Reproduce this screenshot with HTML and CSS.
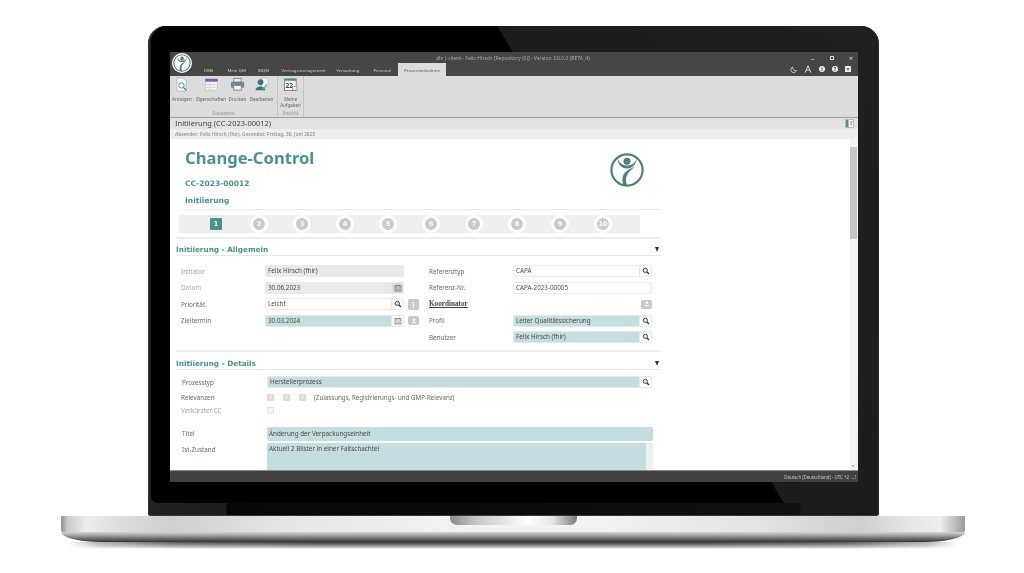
FILE: index.html
```html
<!DOCTYPE html>
<html lang="de">
<head>
<meta charset="utf-8">
<title>Change-Control</title>
<link rel="stylesheet" href="styles.css">
</head>
<body>
<svg class="defs" width="0" height="0" aria-hidden="true">
  <symbol id="search" viewBox="0 0 12 12"><circle cx="5" cy="5" r="3.2" fill="#dfe8ea" stroke="#444" stroke-width="1.5"/><path d="M7.4 7.4 10.6 10.6" stroke="#333" stroke-width="2"/></symbol>
  <symbol id="cal" viewBox="0 0 12 12"><rect x="1.5" y="2.5" width="9" height="8" fill="none" stroke="#666"/><path d="M1.5 4.5h9M4 1v2.500M8 1v2.500M4 6.500v3M6 6.500v3M8 6.500v3" stroke="#666" stroke-width=".8"/></symbol>
  <symbol id="user" viewBox="0 0 10 10"><circle cx="5" cy="3.500" r="1.600" fill="#fff"/><path d="M2 7.800c.4-2 5.600-2 6 0z" fill="#fff"/></symbol>
  <symbol id="mark" viewBox="0 0 34 34"><circle cx="17" cy="17" r="15.600" fill="none" stroke="currentColor" stroke-width="2.200"/><circle cx="17" cy="8.300" r="3.500" fill="currentColor"/><path d="M7.500 5.500c.3 6 4 9.800 9.300 10 5 .2 9.500-3.800 10-10-1.700 4.500-5.300 7-9.800 7-4.300 0-7.600-2.500-9.500-7z" fill="currentColor"/><path d="M24.500 13.800c-5 2.200-10 4.400-11.500 9.200-.9 3-.6 6.500.5 9.500l4 .5c-1.500-3-2-6-1.200-9 .9-3.500 4-6.500 8.200-10.200z" fill="currentColor"/></symbol>
</svg>

<main class="device">
  <section class="lid">
    <div class="bezel">
      <div class="window">
        <header class="titlebar">
          <svg class="app-logo"><use href="#mark"/></svg>
          <div class="titlebar-main">
            <div class="title-row">
              <span class="app-title">dls | client - Felix Hirsch [Repository (S)] - Version 3.0.0.0 (BETA_4)</span>
              <div class="win-controls"><span>–</span><span class="win-max"></span><span>×</span></div>
            </div>
            <div class="tab-row">
              <nav class="tabs">
                <span class="tab tab-dms">DMS</span>
                <span class="tab tab-qm">Mein QM</span>
                <span class="tab tab-mqm">MQM</span>
                <span class="tab tab-vm">Vertragsmanagement</span>
                <span class="tab tab-verw">Verwaltung</span>
                <span class="tab tab-pers">Personal</span>
                <span class="tab tab-active">Prozessteilnahme</span>
              </nav>
              <div class="sys-icons">
                <svg width="7" height="7" viewBox="0 0 10 10"><path d="M4 1.500a4 4 0 1 0 5 5c-3 .8-5.500-1.500-5-5z" fill="none" stroke="#ddd" stroke-width="1.200"/></svg>
                <svg width="8" height="8" viewBox="0 0 10 10"><path d="M1.500 9.500 5 .8l3.500 8.700M3 6.500h4" fill="none" stroke="#ddd" stroke-width="1.200"/></svg>
                <span class="sys-dot">i</span>
                <span class="sys-dot">?</span>
                <span class="sys-box">×</span>
              </div>
            </div>
          </div>
        </header>

        <div class="ribbon">
          <div class="rgroup rgroup-doc">
            <div class="rbuttons">
              <div class="rbtn rbtn-show">
                <svg class="ricon" viewBox="0 0 16 16"><path d="M3 1h7l3 3v11H3z" fill="#f4f4f4" stroke="#9ab" stroke-width=".7"/><circle cx="8" cy="9" r="2.800" fill="none" stroke="#4f9a97" stroke-width="1"/><path d="m10 11 3 3" stroke="#3f7f80" stroke-width="1.300"/></svg>
                <span>Anzeigen</span>
              </div>
              <div class="rbtn rbtn-props">
                <svg class="ricon" viewBox="0 0 16 16"><rect x="1.500" y="2" width="13" height="12" fill="#f3f3f3" stroke="#bbb" stroke-width=".6"/><rect x="1.500" y="2" width="13" height="3" fill="#7c5ba8"/><path d="M6 5v9M1.500 8h13M1.500 11h13" stroke="#d2d2d2"/></svg>
                <span>Eigenschaften</span>
              </div>
              <div class="rbtn rbtn-print">
                <svg class="ricon" viewBox="0 0 16 16"><rect x="4" y="1.500" width="8" height="4" fill="#eee" stroke="#889"/><rect x="1" y="5" width="14" height="6.500" rx="1" fill="#6a8795"/><rect x="4" y="9" width="8" height="5" fill="#f5f5f5" stroke="#789"/></svg>
                <span>Drucken</span>
              </div>
              <div class="rbtn rbtn-edit">
                <svg class="ricon" viewBox="0 0 16 16"><path d="M8 1h5l2 2v8H8z" fill="#f4f4f4" stroke="#aaa" stroke-width=".6"/><circle cx="7" cy="5.500" r="3" fill="#35757c"/><path d="M1.500 14c.3-5 10-5 10.500 0z" fill="#35757c"/><path d="m9 13 5-5" stroke="#6fa3a8" stroke-width="1.300"/></svg>
                <span>Bearbeiten</span>
              </div>
            </div>
            <div class="rlabel">Dokument</div>
          </div>
          <div class="rgroup rgroup-view">
            <div class="rbuttons">
              <div class="rbtn rbtn-tasks">
                <svg class="ricon" viewBox="0 0 16 16"><rect x="1.500" y="2" width="12.500" height="12.500" fill="#f7f7f7" stroke="#666" stroke-width=".8"/><rect x="1.500" y="2" width="12.500" height="2" fill="#4f8f8c"/><text x="2.700" y="11.500" class="cal-num">22</text><rect x="10" y="10" width="5" height="4" fill="#eee" stroke="#777" stroke-width=".6"/></svg>
                <span>Meine<br>Aufgaben</span>
              </div>
            </div>
            <div class="rlabel">Ansicht</div>
          </div>
        </div>

        <div class="doc-title">
          <span>Initiierung (CC-2023-00012)</span>
          <svg width="9" height="9" viewBox="0 0 9 9"><rect x=".5" y=".5" width="8" height="8" fill="#f5f5f5" stroke="#999" stroke-width=".6"/><rect x="1" y="1" width="2.500" height="7" fill="#4d8f95"/><path d="M5 3h2.500M5 5h2" stroke="#888"/></svg>
        </div>
        <div class="doc-sender">Absender: Felix Hirsch (fhir), Gesendet: Freitag, 30. Juni 2023</div>

        <div class="doc-area">
          <div class="doc">
            <div class="hero">
              <div class="hero-text">
                <h1>Change-Control</h1>
                <div class="doc-no">CC-2023-00012</div>
                <div class="doc-step">Initiierung</div>
              </div>
              <svg class="hero-logo"><use href="#mark"/></svg>
            </div>
            <div class="steps">
              <span class="step step-on">1</span>
              <span class="step">2</span><span class="step">3</span><span class="step">4</span><span class="step">5</span><span class="step">6</span><span class="step">7</span><span class="step">8</span><span class="step">9</span><span class="step">10</span>
            </div>

            <div class="sec-head sec-first"><h2>Initiierung - Allgemein</h2><span class="caret"></span></div>
            <div class="cols">
              <div class="col">
                <div class="row"><label class="lbl lbl-mute">Initiator</label><div class="field ro"><span class="val">Felix Hirsch (fhir)</span></div></div>
                <div class="row"><label class="lbl lbl-mute2">Datum</label><div class="field ro"><span class="val">30.06.2023</span><span class="btn btn-ro"><svg class="ic"><use href="#cal"/></svg></span></div></div>
                <div class="row"><label class="lbl">Priorität</label><div class="field wh"><span class="val">Leicht</span><span class="btn"><svg class="ic"><use href="#search"/></svg></span></div><span class="badge">!</span></div>
                <div class="row"><label class="lbl">Zieltermin</label><div class="field mint"><span class="val">30.03.2024</span><span class="btn"><svg class="ic"><use href="#cal"/></svg></span></div><span class="badge badge-s"><svg class="ic"><use href="#user"/></svg></span></div>
              </div>
              <div class="col col-r">
                <div class="row"><label class="lbl">Referenztyp</label><div class="field wh"><span class="val">CAPA</span><span class="btn"><svg class="ic"><use href="#search"/></svg></span></div></div>
                <div class="row"><label class="lbl">Referenz-Nr.</label><div class="field wh"><span class="val">CAPA-2023-00005</span></div></div>
                <div class="row"><label class="lbl-strong">Koordinator</label><div class="slot-end"><span class="badge badge-s"><svg class="ic"><use href="#user"/></svg></span></div></div>
                <div class="row"><label class="lbl">Profil</label><div class="field mint"><span class="val">Leiter Qualitätssicherung</span><span class="btn"><svg class="ic"><use href="#search"/></svg></span></div></div>
                <div class="row"><label class="lbl">Benutzer</label><div class="field mint"><span class="val">Felix Hirsch (fhir)</span><span class="btn"><svg class="ic"><use href="#search"/></svg></span></div></div>
              </div>
            </div>

            <div class="sec-head sec-second"><h2>Initiierung - Details</h2><span class="caret"></span></div>
            <div class="details">
              <div class="drow drow-type"><label class="lbl">Prozesstyp</label><div class="field mint"><span class="val">Herstellerprozess</span><span class="btn"><svg class="ic"><use href="#search"/></svg></span></div></div>
              <div class="drow drow-rel"><label class="lbl lbl-nudge">Relevanzen</label><div class="checks"><span class="chk">✓</span><span class="chk">✓</span><span class="chk">✓</span><span class="chk-note">(Zulassungs, Registrierungs- und GMP-Relevanz)</span></div></div>
              <div class="drow drow-short"><label class="lbl lbl-mute lbl-nudge">Verkürzter CC</label><div class="checks"><span class="chk chk-empty"></span></div></div>
              <div class="drow drow-title"><label class="lbl">Titel</label><div class="field mint field-full"><span class="val">Änderung der Verpackungseinheit</span></div></div>
              <div class="drow drow-state"><label class="lbl">Ist-Zustand</label><div class="area"><span class="val">Aktuell 2 Blister in einer Faltschachtel</span><span class="area-bar"></span></div></div>
            </div>
          </div>
          <div class="scrollbar"><span class="thumb"></span><span class="arrow-down"></span></div>
        </div>

        <footer class="status"><span>Deutsch (Deutschland) - UTC +2</span><span class="grip"></span></footer>
      </div>
    </div>
  </section>
  <section class="base">
    <div class="base-top"><span class="notch"></span></div>
    <div class="base-lip"></div>
    <div class="base-shadow"></div>
  </section>
</main>
</body>
</html>
```
FILE: styles.css
```css
* { box-sizing: border-box; }
html, body { margin: 0; padding: 0; background: #fff; }
body { width: 1024px; height: 573px; overflow: hidden; font-family: "Noto Sans", sans-serif; font-size: 6px; color: #555; }
.defs { display: block; height: 0; }

.device { display: flex; flex-direction: column; align-items: center; padding-top: 26px; }

/* lid */
.lid { width: 731px; height: 490px; margin-left: 3px; padding: 0 3px 13px; background: linear-gradient(90deg, #222 0, #1e1e1e 78px, #070707 79px, #111 652px, #1c1c1c 653px); border-radius: 18px 18px 3px 3px; box-shadow: inset 0 0 0 1px #333; }
.bezel { height: 100%; padding: 26px 18px 21px 19px; background: linear-gradient(59deg, #000 62.500%, #1c1c1c 62.600%, #202020 100%); border-radius: 16px 16px 7px 7px; }

.window { height: 100%; display: flex; flex-direction: column; background: #fff; overflow: hidden; filter: blur(.35px); }

/* title bar */
.titlebar { flex: none; height: 24px; display: flex; background: #464646; color: #ccc; }
.app-logo { width: 20px; height: 20px; margin: 1px 0 0 2px; flex: none; color: #4e7f7b; background: #fff; border-radius: 50%; padding: 1px; }
.titlebar-main { flex: 1; display: flex; flex-direction: column; }
.title-row { height: 11px; display: flex; align-items: center; position: relative; padding-top: 1px; }
.app-title { margin-left: 244px; font-size: 5.050px; color: #aaa; white-space: nowrap; }
.win-controls { margin-left: auto; margin-right: 5px; width: 42px; display: flex; justify-content: space-between; align-items: center; color: #ddd; font-size: 7px; line-height: 1; }
.win-max { width: 4px; height: 4px; border: 1px solid #ddd; }
.tab-row { flex: 1; display: flex; align-items: flex-end; justify-content: space-between; }
.tabs { display: flex; height: 13px; align-items: center; }
.tab { font-size: 4.300px; color: #ccc; white-space: nowrap; }
.tab-dms { margin-left: 12px; }
.tab-qm { margin-left: 14px; }
.tab-mqm { margin-left: 12px; }
.tab-vm { margin-left: 12.500px; }
.tab-verw { margin-left: 10.500px; }
.tab-pers { margin-left: 14px; }
.tab-active { margin-left: 7px; height: 13px; width: 48px; background: #dcdcdc; color: #555; display: flex; align-items: center; justify-content: center; }
.sys-icons { display: flex; align-items: center; gap: 7px; margin: 0 7px 3px 0; height: 8px; }
.sys-dot { width: 6px; height: 6px; border-radius: 50%; background: #eee; color: #333; font-size: 5px; font-weight: 700; line-height: 6px; text-align: center; }
.sys-box { width: 6px; height: 6px; background: #eee; color: #333; font-size: 6px; font-weight: 700; line-height: 6px; text-align: center; }

/* ribbon */
.ribbon { flex: none; height: 42px; display: flex; background: #dcdcdc; border-bottom: 1px solid #9c9c9c; }
.rgroup { display: flex; flex-direction: column; border-right: 1px solid #c4c4c4; }
.rgroup-doc { width: 108px; }
.rgroup-view { width: 26px; }
.rbuttons { flex: 1; display: flex; position: relative; }
.rbtn { display: flex; flex-direction: column; align-items: center; font-size: 4.500px; line-height: 6px; color: #666; text-align: center; white-space: nowrap; }
.rbtn-show { width: 24px; }
.rbtn-props { width: 35px; }
.rbtn-print { width: 18px; }
.rbtn-edit { width: 31px; }
.rbtn-tasks { width: 26px; }
.ricon { width: 15px; height: 15px; margin: 1px 0 4px; flex: none; }
.cal-num { font: 700 7px "Noto Sans", sans-serif; fill: #444; }
.rlabel { height: 8px; font-size: 4.300px; line-height: 8px; color: #aaa; text-align: center; font-weight: 700; }

/* doc header */
.doc-title { flex: none; height: 11px; padding: 0 4px 0 5px; display: flex; align-items: center; justify-content: space-between; background: #e2e2e2; color: #444; font-size: 7.500px; line-height: 1; }
.doc-sender { flex: none; height: 10px; padding-left: 5px; background: #eeeeee; font-size: 4.700px; font-weight: 700; line-height: 10px; color: #a0a0a0; }
.doc-area { flex: 1; min-height: 0; display: flex; }
.doc { flex: 1; min-width: 0; overflow: hidden; padding-left: 6px; }
.scrollbar { flex: none; width: 8px; padding-top: 8px; background: #f3f3f3; display: flex; flex-direction: column; justify-content: space-between; align-items: flex-start; }
.thumb { display: block; width: 7px; height: 92px; background: #c6c6c6; }
.arrow-down { margin: 0 0 3px 2px; border-left: 1.500px solid transparent; border-right: 1.500px solid transparent; border-top: 2px solid #888; }

/* hero */
.hero { width: 485px; height: 71px; padding: 10px 17px 0 9px; margin: 0; display: flex; justify-content: space-between; position: relative; }
.hero-text { flex: 1; height: 61px; border-bottom: 1px solid #e6e6e6; margin-right: -17px; }
h1 { margin: 0; font-size: 16.600px; line-height: 18px; font-weight: 700; color: #4b918c; }
.doc-no { margin-top: 12px; font: 700 7.500px/10px "DejaVu Sans", sans-serif; color: #4b918c; }
.doc-step { margin-top: 7px; font: 700 7.500px/10px "DejaVu Sans", sans-serif; color: #4b918c; }
.hero-logo { position: absolute; right: 17px; top: 14px; width: 34px; height: 34px; color: #4e7f7b; }

/* steps */
.steps { width: 461px; height: 18px; margin: 5px 0 0 3px; padding-left: 22px; display: flex; align-items: center; background: #eeeeee; }
.step { width: 18px; height: 18px; margin-right: 25px; flex: none; border-radius: 50%; border: 3px solid #fff; background: #c9c9c9; color: #fff; font: 700 6.500px/12px "DejaVu Sans", sans-serif; text-align: center; }
.step-on { width: 12px; height: 12px; margin: 0 28px 0 9px; border: 0; border-radius: 1px; background: #4b918c; line-height: 12px; }

/* sections */
.sec-head { width: 485px; display: flex; align-items: center; justify-content: space-between; padding-right: 2px; border-top: 2px solid #eeeeee; border-bottom: 1px solid #e6e6e6; }
.sec-first { height: 19px; margin-top: 4px; padding-top: 5px; }
.sec-second { height: 20px; margin-top: 4px; padding-top: 7px; }
h2 { margin: 0; font: 700 7.300px/10px "DejaVu Sans", sans-serif; color: #4b918c; }
.caret { width: 0; height: 0; border-left: 2.500px solid transparent; border-right: 2.500px solid transparent; border-top: 5px solid #333; }

/* form */
.cols { display: flex; width: 485px; padding: 7px 0 0 5px; }
.col { width: 248px; }
.col-r { width: 223px; }
.row { height: 16.500px; display: flex; align-items: center; }
.lbl, .lbl-strong { flex: none; width: 84px; font-size: 6.300px; color: #6d675f; white-space: nowrap; }
.lbl-mute { color: #a0a0a0; }
.lbl-mute2 { color: #b0a898; }
.lbl-strong { font: 700 7.200px "Liberation Serif", serif; color: #444; text-decoration: underline; }
.field { flex: none; width: 139px; height: 12px; display: flex; align-items: stretch; border-radius: 2px; border: 1px solid #eaeaea; overflow: hidden; }
.ro { background: #e9e9e9; }
.wh { background: #fff; }
.mint { background: #c3dde1; border-color: #dfeaec; }
.val { flex: 1; padding-left: 2px; font-size: 6.300px; line-height: 10px; color: #4f4a40; white-space: nowrap; overflow: hidden; }
.btn { flex: none; width: 12px; background: #fff; display: flex; align-items: center; justify-content: center; border-left: 1px solid #e6e6e6; }
.btn-ro { background: #dcdcdc; }
.ic { width: 8px; height: 8px; display: block; }
.badge { flex: none; width: 11px; height: 11px; margin-left: 4px; border-radius: 2px; background: #c8c8c8; color: #fff; font: 700 8px/11px "Noto Sans", sans-serif; text-align: center; display: flex; align-items: center; justify-content: center; }
.badge-s { height: 9px; }
.slot-end { width: 139px; display: flex; justify-content: flex-end; }

.details { width: 485px; padding: 7px 0 0 6px; }
.drow { display: flex; align-items: center; }
.drow .lbl { width: 85px; }
.lbl-nudge { margin-left: -1px; margin-right: 1px; }
.drow .field { width: 385px; }
.drow .field-full { width: 386px; height: 14px; border: 0; }
.drow-type { height: 11px; margin-bottom: 3px; }
.drow-rel { height: 13px; }
.drow-short { height: 13px; margin-bottom: 10px; }
.drow-title { height: 14px; margin-bottom: 2px; }
.field-full .val { line-height: 14px; }
.drow-state { height: 40px; align-items: flex-start; }
.drow-state .lbl { padding-top: 2px; }
.checks { display: flex; align-items: center; }
.chk { width: 7px; height: 7px; margin-right: 9px; border-radius: 1px; background: #dcdcdc; color: #fff; font-size: 6px; line-height: 7px; text-align: center; }
.chk-empty { background: #f4f4f4; border: 1px solid #e0e0e0; }
.chk-note { margin-left: -1px; font-size: 6.200px; color: #6d675f; white-space: nowrap; }
.area { width: 386px; height: 40px; display: flex; background: #c3dde1; border-radius: 2px; overflow: hidden; }
.area .val { padding-top: 1px; }
.area-bar { flex: none; width: 7px; background: #eeeeee; }

/* status */
.status { flex: none; height: 12px; display: flex; align-items: center; justify-content: flex-end; gap: 3px; padding-right: 2px; background: #424242; border-top: 1px solid #8a8a8a; color: #c8c8c8; font-size: 4.400px; }
.grip { width: 4px; height: 4px; border-right: 1px dotted #888; border-bottom: 1px dotted #888; }

/* base */
.base { width: 904px; margin-left: 2px; display: flex; flex-direction: column; align-items: center; }
.base-top { width: 100%; height: 16px; display: flex; justify-content: center; border-radius: 0 0 2px 2px; background: linear-gradient(90deg, #8f8f8f 0, #c9c9c9 6px, #ececec 25px, #dcdcdc 60px, #d0d0d0 110px, #e6e6e6 230px, #f1f1f1 380px, #f3f3f3 520px, #e4e4e4 690px, #cfcfcf 800px, #e6e6e6 850px, #ededed 880px, #c0c0c0 893px, #9a9a9a 904px); }
.notch { width: 127px; height: 9px; border-radius: 0 0 7px 7px; background: linear-gradient(90deg, #8a8a8a 0, #c4c4c4 25px, #fff 60%, #e8e8e8 80%, #7c7c7c 100%); }
.base-lip { width: 100%; height: 10px; border-radius: 0 0 40px 40px / 0 0 10px 10px; background: linear-gradient(180deg, #d4d4d4 0, #aaa 30%, #777 60%, #333 100%); }
.base-shadow { width: 890px; height: 7px; background: linear-gradient(90deg, #fff 0, rgba(255,255,255,.6) 30px, rgba(255,255,255,.15) 110px, rgba(255,255,255,0) 250px, rgba(255,255,255,0) 640px, rgba(255,255,255,.15) 780px, rgba(255,255,255,.6) 860px, #fff 890px), linear-gradient(#3a3a3a 0, #777 40%, #bbb 75%, #fff 100%); }
```
